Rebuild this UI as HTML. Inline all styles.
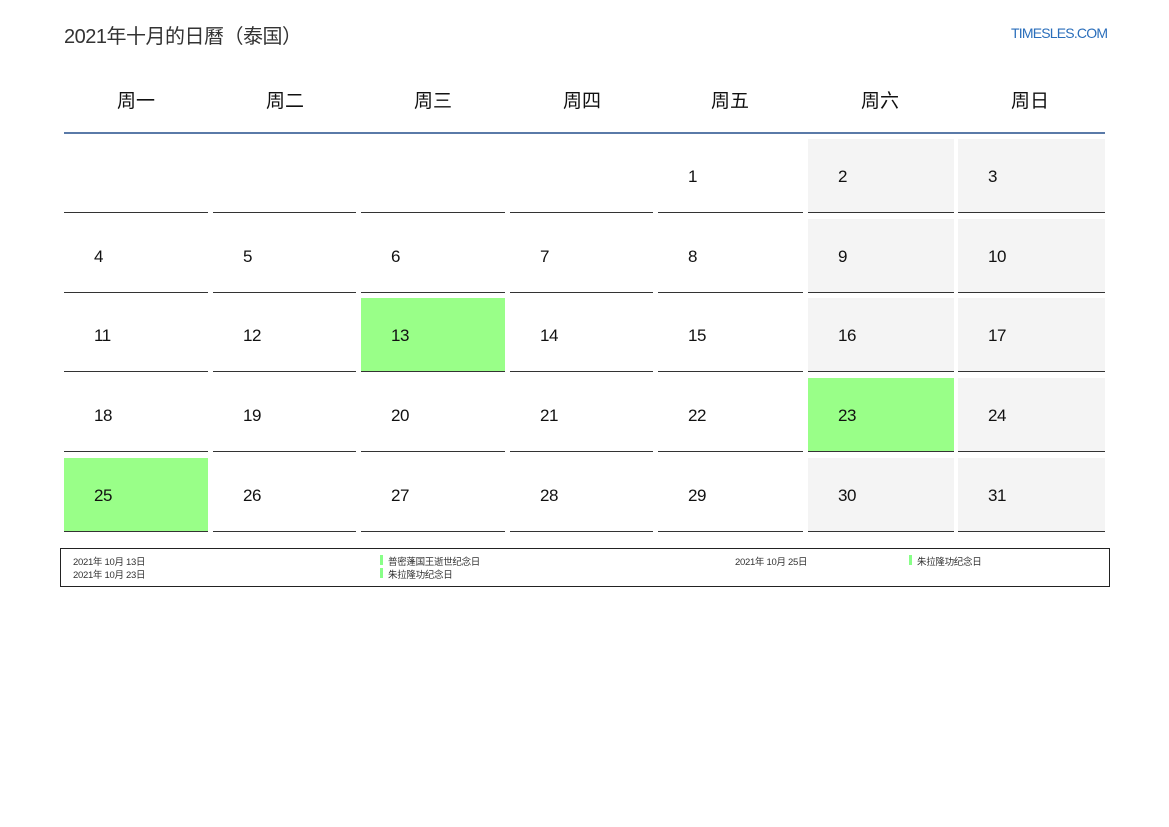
<!DOCTYPE html>
<html><head><meta charset="utf-8"><style>
body{margin:0;width:1169px;height:827px;background:#fff;position:relative;font-family:"Liberation Sans","Noto Sans CJK SC",sans-serif;overflow:hidden}
.a{position:absolute}
.title{left:64px;top:20px;font-size:20px;color:#333;letter-spacing:-0.5px}
.logo{left:1011px;top:25px;font-size:14px;color:#2a6ebb;letter-spacing:-0.8px}
.wd{top:86px;width:144px;text-align:center;font-size:19px;color:#111}
.rule{left:64px;top:132px;width:1041px;height:2px;background:#5a7aa8}
.c{height:74px;border-bottom:1px solid #333;box-sizing:border-box;font-size:17px;color:#111;padding-left:30px;line-height:76px;letter-spacing:-0.5px}
.we{background:#f4f4f4}
.h{background:#99ff88}
.leg{left:60px;top:548px;width:1048px;height:37px;border:1px solid #222}
.lt{font-size:9.5px;color:#333;letter-spacing:-0.3px}
.bar{width:3px;height:10px;background:#8f8}
</style></head><body>
<div class="a title">2021年十月的日曆（泰国）</div>
<div class="a logo">TIMESLES.COM</div>
<div class="a wd" style="left:64px">周一</div>
<div class="a wd" style="left:213px">周二</div>
<div class="a wd" style="left:361px">周三</div>
<div class="a wd" style="left:510px">周四</div>
<div class="a wd" style="left:658px">周五</div>
<div class="a wd" style="left:808px">周六</div>
<div class="a wd" style="left:958px">周日</div>
<div class="a rule"></div>
<div id="g"></div>
<script>
var xs=[64,213,361,510,658,808,958],ws=[144,143,144,143,145,146,147],ys=[139,219,298,378,458];
var h='';
for(var r=0;r<5;r++)for(var c=0;c<7;c++){var d=r*7+c-3;if(d<1||d>31){h+='<div class="a c" style="left:'+xs[c]+'px;top:'+ys[r]+'px;width:'+ws[c]+'px"></div>';continue;}
var cl='c';if(d==13||d==23||d==25)cl+=' h';else if(c>=5)cl+=' we';
h+='<div class="a '+cl+'" style="left:'+xs[c]+'px;top:'+ys[r]+'px;width:'+ws[c]+'px">'+d+'</div>';}
document.getElementById('g').innerHTML=h;
</script>
<div class="a leg"></div>
<div class="a lt" style="left:73px;top:554px">2021年 10月 13日</div>
<div class="a lt" style="left:73px;top:567px">2021年 10月 23日</div>
<div class="a bar" style="left:380px;top:555px"></div>
<div class="a lt" style="left:388px;top:554px">普密蓬国王逝世纪念日</div>
<div class="a bar" style="left:380px;top:568px"></div>
<div class="a lt" style="left:388px;top:567px">朱拉隆功纪念日</div>
<div class="a lt" style="left:735px;top:554px">2021年 10月 25日</div>
<div class="a bar" style="left:909px;top:555px"></div>
<div class="a lt" style="left:917px;top:554px">朱拉隆功纪念日</div>
</body></html>
